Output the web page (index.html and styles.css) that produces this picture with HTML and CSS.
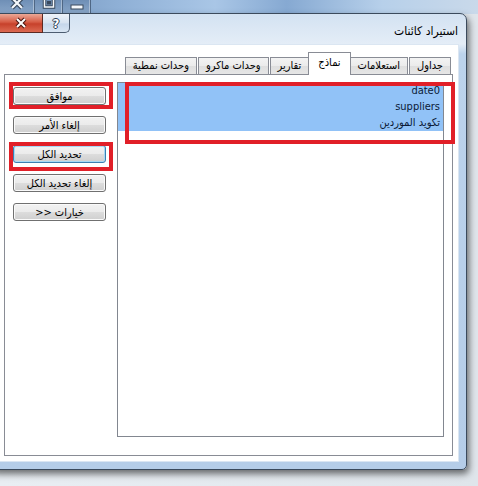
FILE: index.html
```html
<!DOCTYPE html>
<html lang="ar">
<head>
    <meta charset="UTF-8">
    <title>استيراد كائنات</title>
    <link rel="stylesheet" href="styles.css">
</head>
<body>
    <!-- caption of the window behind the dialog -->
    <div class="parent-bar">
        <span class="pbtn pbtn-close">
            <svg width="16" height="12" viewBox="0 0 16 12"><path d="M3 -2 L13 8 M13 -2 L3 8" stroke="#3a4a5e" stroke-width="4.5" fill="none"/><path d="M3 -2 L13 8 M13 -2 L3 8" stroke="#f4f7fa" stroke-width="2.2" fill="none"/></svg>
        </span>
        <span class="pbtn">
            <svg width="14" height="12" viewBox="0 0 14 12"><rect x="2.5" y="-2" width="9" height="9" fill="none" stroke="#3a4a5e" stroke-width="3.5"/><rect x="2.5" y="-2" width="9" height="9" fill="none" stroke="#f4f7fa" stroke-width="1.5"/><rect x="5" y="1" width="4" height="3.5" fill="#3a4a5e"/></svg>
        </span>
        <span class="pbtn">
            <svg width="16" height="12" viewBox="0 0 16 12"><rect x="2" y="5" width="12" height="4" fill="#f4f7fa" stroke="#3a4a5e" stroke-width="1"/></svg>
        </span>
    </div>

    <div class="dialog">
        <div class="titlebar">
            <div class="caption-buttons">
                <span class="cap cap-close">
                    <svg width="14" height="12" viewBox="0 0 14 12"><path d="M3 2 L11 10 M11 2 L3 10" stroke="#4a1510" stroke-width="4" fill="none"/><path d="M3 2 L11 10 M11 2 L3 10" stroke="#ffffff" stroke-width="2" fill="none"/></svg>
                </span>
                <span class="cap cap-help">?</span>
            </div>
            <div class="title">استيراد كائنات</div>
        </div>

        <div class="client">
            <div class="tabcontrol">
                <div class="tabs" dir="rtl">
                    <div class="tab">جداول</div>
                    <div class="tab">استعلامات</div>
                    <div class="tab tab-active">نماذج</div>
                    <div class="tab">تقارير</div>
                    <div class="tab">وحدات ماكرو</div>
                    <div class="tab">وحدات نمطية</div>
                </div>
                <div class="panel">
                    <div class="buttons" dir="rtl">
                        <button class="btn">موافق</button>
                        <button class="btn">إلغاء الأمر</button>
                        <button class="btn btn-focus">تحديد الكل</button>
                        <button class="btn">إلغاء تحديد الكل</button>
                        <button class="btn">خيارات &lt;&lt;</button>
                    </div>
                    <div class="listbox" dir="rtl">
                        <div class="row row-selected">date0</div>
                        <div class="row row-selected">suppliers</div>
                        <div class="row row-selected">تكويد الموردين</div>
                    </div>
                </div>
            </div>
        </div>
    </div>

    <!-- red highlight boxes drawn over the screenshot -->
    <div class="mark mark-ok"></div>
    <div class="mark mark-select"></div>
    <div class="mark mark-list"></div>
</body>
</html>
```

FILE: styles.css
```css
body {
    margin: 0;
    width: 478px;
    height: 486px;
    overflow: hidden;
    position: relative;
    background: linear-gradient(to right, #e9eef3, #dfe5eb);
    font-family: "DejaVu Sans Condensed", "DejaVu Sans", sans-serif;
    font-size: 11px;
    color: #000;
}

/* window behind */
.parent-bar {
    height: 14px;
    display: flex;
    background: linear-gradient(to right, #6d8fb8 0%, #8fb0d6 25%, #a9c6e6 45%, #86a9d2 60%, #b7d0ea 80%, #c9d9ea 100%);
}

.pbtn {
    width: 27px;
    height: 14px;
    display: flex;
    justify-content: center;
    align-items: flex-start;
    border-right: 1px solid #4f6785;
    background: linear-gradient(#6f8fb6, #8aa7c9);
    box-shadow: inset -1px 0 0 rgba(255,255,255,0.35);
}

.pbtn-close {
    width: 34px;
}

/* dialog window */
.dialog {
    position: absolute;
    left: -10px;
    top: 13px;
    width: 477px;
    height: 457px;
    box-sizing: border-box;
    border: 1px solid #3b4a5c;
    border-radius: 7px 7px 5px 5px;
    padding: 0 7px 7px 7px;
    background: linear-gradient(#d3e2f2 0px, #e4edf7 30px, #bcd3ec 40px, #b5cde8 100%);
    box-shadow: 2px 4px 7px rgba(0,0,0,0.55);
    display: flex;
    flex-direction: column;
}

.titlebar {
    height: 30px;
    flex: none;
    display: flex;
    justify-content: space-between;
    align-items: flex-start;
}

.caption-buttons {
    display: flex;
}

.cap {
    height: 18px;
    display: flex;
    justify-content: center;
    align-items: center;
    border: 1px solid #4c5c70;
    border-top: none;
}

.cap-close {
    width: 43px;
    background: linear-gradient(#eba896 0%, #d65c45 45%, #c7412b 55%, #dc6a52 100%);
    border-color: #5b2a22;
}

.cap-help {
    width: 26px;
    border-left: none;
    border-radius: 0 0 5px 0;
    background: linear-gradient(#eef3f9 0%, #d6e2f0 50%, #c5d6ea 55%, #d8e5f3 100%);
    color: #fff;
    font-weight: bold;
    font-size: 13px;
    text-shadow: 1px 0 0 #2c3e55, -1px 0 0 #2c3e55, 0 1px 0 #2c3e55, 0 -1px 0 #2c3e55;
}

.title {
    margin-top: 10px;
    margin-right: 1px;
    font-size: 12px;
    color: #000;
}

.client {
    flex: 1;
    background: #fff;
    border: 1px solid #dbe6f2;
    box-sizing: border-box;
    padding: 7px 5px 0 5px;
}

/* tab control */
.tabcontrol {
    display: flex;
    flex-direction: column;
}

.tabs {
    height: 22px;
    display: flex;
    align-items: flex-end;
    padding-right: 2px;
}

.tab {
    height: 16px;
    line-height: 16px;
    padding: 0 7px;
    border: 1px solid #898c95;
    border-bottom: none;
    margin-left: 1px;
    background: linear-gradient(#f3f3f3 0%, #ebebeb 50%, #dedede 50%, #e6e6e6 100%);
    white-space: nowrap;
}

.tab-active {
    height: 22px;
    line-height: 20px;
    margin: 0 -2px -1px -1px;
    padding: 0 9px;
    background: #fff;
    position: relative;
    z-index: 1;
}

.panel {
    height: 355px;
    border: 1px solid #898c95;
    background: #fff;
    display: flex;
    gap: 11px;
    padding: 7px 8px 18px 8px;
}

.buttons {
    width: 93px;
    flex: none;
    display: flex;
    flex-direction: column;
    gap: 11px;
    margin-top: 5px;
}

.btn {
    height: 18px;
    padding: 0;
    font-family: "DejaVu Sans Condensed", "DejaVu Sans", sans-serif;
    font-size: 11px;
    color: #000;
    border: 1px solid #707070;
    border-radius: 3px;
    background: linear-gradient(#f2f2f2 0%, #ebebeb 50%, #dddddd 50%, #cfcfcf 100%);
    box-shadow: inset 0 0 0 1px #fafafa;
}

.btn-focus {
    border-color: #3c7fb1;
    box-shadow: inset 0 0 0 1px #a7d9f5;
}

.listbox {
    flex: 1;
    border: 1px solid #828790;
    background: #fff;
}

.row {
    height: 16px;
    line-height: 16px;
    padding-right: 3px;
    color: #0b1a36;
}

.row-selected {
    background: #91c2f7;
}

/* red annotation boxes */
.mark {
    position: absolute;
    box-sizing: border-box;
    border: 4px solid #e11f28;
}

.mark-ok {
    left: 9px;
    top: 82px;
    width: 104px;
    height: 27px;
}

.mark-select {
    left: 9px;
    top: 142px;
    width: 104px;
    height: 29px;
}

.mark-list {
    left: 125px;
    top: 82px;
    width: 330px;
    height: 62px;
}
```
